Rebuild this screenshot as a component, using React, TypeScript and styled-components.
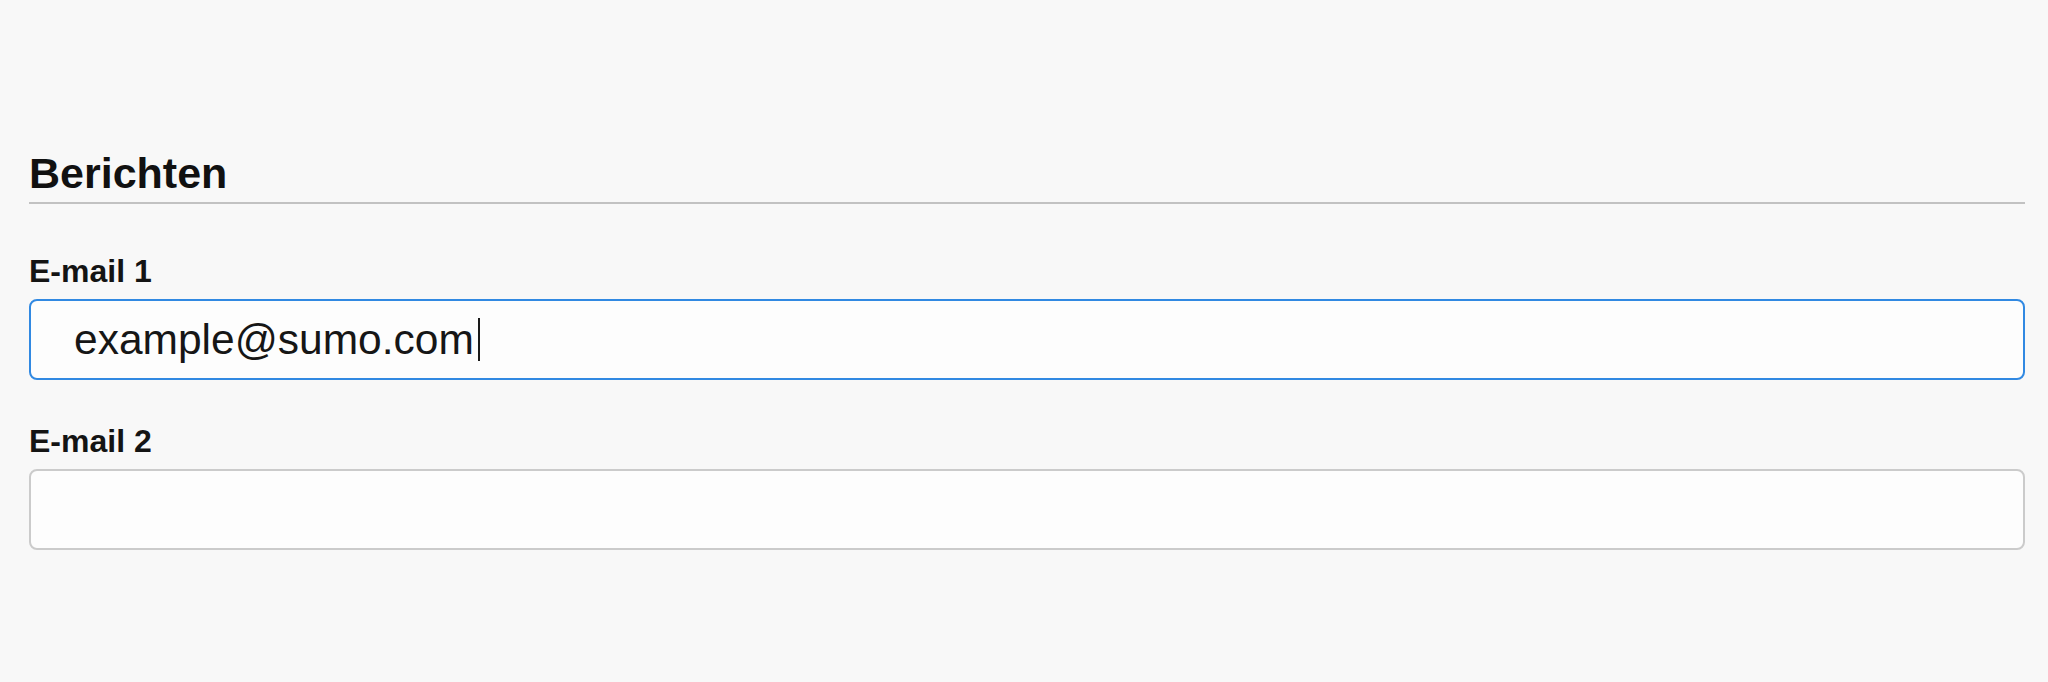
import React from 'react';
import styled, {createGlobalStyle} from 'styled-components';

const GlobalStyle = createGlobalStyle`
  html, body {
    margin: 0;
    padding: 0;
    background: #f8f8f8;
  }
  body {
    font-family: 'Liberation Sans', Arial, sans-serif;
    color: #111;
  }
`;

const Page = styled.main`
  padding: 149px 23px 0 29px;
  min-height: 682px;
  box-sizing: border-box;
`;

const Section = styled.section`
  display: flex;
  flex-direction: column;
`;

const Heading = styled.h2`
  margin: 0;
  font-size: 43px;
  font-weight: 700;
  line-height: 48px;
  color: #111;
  padding-bottom: 5px;
  border-bottom: 2px solid #c2c2c2;
`;

const Group = styled.div<{$first?: boolean}>`
  display: flex;
  flex-direction: column;
  margin-top: ${(p) => (p.$first ? '49px' : '43px')};
`;

const Label = styled.label`
  font-size: 32px;
  font-weight: 700;
  line-height: 36px;
  color: #141414;
  margin-bottom: 10px;
`;

const Field = styled.div<{$focused?: boolean}>`
  display: flex;
  align-items: center;
  height: 81px;
  box-sizing: border-box;
  padding: 0 0 0 43px;
  background: #fdfdfd;
  border: 2px solid ${(p) => (p.$focused ? '#3189e2' : '#cbcbcb')};
  border-radius: 8px;
  font-size: 42.5px;
  color: #161616;
`;

const Caret = styled.span`
  display: inline-block;
  width: 2px;
  height: 43px;
  margin-left: 4px;
  background: #1a1a1a;
`;

export default function App() {
  return (
    <>
      <GlobalStyle />
      <Page>
        <Section>
          <Heading>Berichten</Heading>
          <Group $first>
            <Label>E-mail 1</Label>
            <Field $focused>
              example@sumo.com
              <Caret />
            </Field>
          </Group>
          <Group>
            <Label>E-mail 2</Label>
            <Field />
          </Group>
        </Section>
      </Page>
    </>
  );
}
